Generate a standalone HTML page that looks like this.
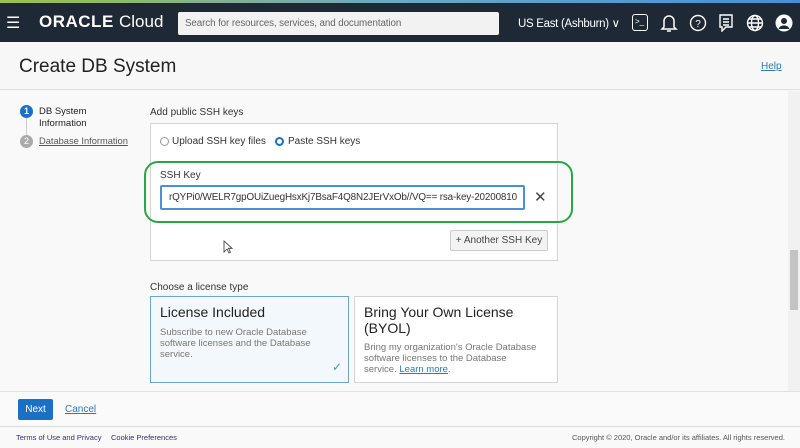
<!DOCTYPE html>
<html><head><style>
*{box-sizing:border-box;margin:0;padding:0}
body{width:800px;height:448px;overflow:hidden;font-family:"Liberation Sans",sans-serif;background:#f9f9f9;position:relative;color:#333}
.a{position:absolute}
.hdr{left:0;top:0;width:800px;height:42px;background:#1e2935}
.grad{left:0;top:0;width:800px;height:3px;background:linear-gradient(90deg,#9bc24a,#6aa7c9,#4b8fd0)}
.search{left:178px;top:12px;width:321px;height:23px;background:#f2f2f2;border-radius:2px;font-size:9.8px;color:#666;padding:6px 7px;letter-spacing:-0.1px}
.w{color:#fff}
.card{background:#fff;border:1px solid #d4d4d4}
</style></head><body>
<div class="a hdr"></div><div class="a grad"></div>
<div class="a w" style="left:6px;top:13px;font-size:16px">☰</div>
<div class="a w" style="left:39px;top:12px;font-size:17px;font-weight:bold;letter-spacing:0.5px">ORACLE <span style="font-weight:normal;letter-spacing:0">Cloud</span></div>
<div class="a search">Search for resources, services, and documentation</div>
<div class="a w" style="left:518px;top:16px;font-size:11.5px;letter-spacing:-0.3px">US East (Ashburn) ∨</div>
<div class="a" style="left:632px;top:14px;width:16px;height:17px;border:1.5px solid #fff;border-radius:3px;color:#fff;font-size:8px;padding-left:2px;line-height:13px">&gt;_</div>
<svg class="a" style="left:660px;top:13px" width="18" height="20" viewBox="0 0 18 20" fill="none" stroke="#fff" stroke-width="1.5"><path d="M4 14V8a5 5 0 0110 0v6l2 2H2z"/><path d="M7 18h4"/></svg>
<svg class="a" style="left:689px;top:14px" width="18" height="18" viewBox="0 0 18 18" fill="none" stroke="#fff" stroke-width="1.4"><circle cx="9" cy="9" r="7.5"/><text x="9" y="13" fill="#fff" stroke="none" font-size="10" text-anchor="middle" font-family="Liberation Sans">?</text></svg>
<svg class="a" style="left:718px;top:14px" width="16" height="18" viewBox="0 0 16 18" fill="none" stroke="#fff" stroke-width="1.4"><path d="M2 1h12v12H8l-4 4v-4H2z"/><path d="M5 5h6M5 8h6M5 11h6"/></svg>
<svg class="a" style="left:746px;top:14px" width="18" height="18" viewBox="0 0 18 18" fill="none" stroke="#fff" stroke-width="1.4"><circle cx="9" cy="9" r="7.5"/><ellipse cx="9" cy="9" rx="3.5" ry="7.5"/><path d="M1.5 9h15M3 5h12M3 13h12"/></svg>
<svg class="a" style="left:775px;top:14px" width="18" height="18" viewBox="0 0 18 18"><circle cx="9" cy="9" r="8.5" fill="#fff"/><circle cx="9" cy="7" r="3" fill="#1e2935"/><path d="M3.5 15a6 6 0 0111 0" fill="#1e2935"/></svg>

<div class="a" style="left:0;top:42px;width:800px;height:48px;background:#f7f7f7;border-bottom:1px solid #ddd"></div>
<div class="a" style="left:19px;top:56px;font-size:19px;color:#222">Create DB System</div>
<div class="a" style="left:761px;top:61px;font-size:10px;color:#2a7ab8;text-decoration:underline">Help</div>

<div class="a" style="left:788px;top:91px;width:12px;height:300px;background:#f1f1f1"></div>
<div class="a" style="left:790px;top:250px;width:8px;height:60px;background:#c4c4c4"></div>

<div class="a" style="left:20px;top:105px;width:13px;height:13px;border-radius:50%;background:#1b70c4;color:#fff;font-size:9px;text-align:center;line-height:13px;font-weight:bold">1</div>
<div class="a" style="left:26px;top:118px;width:1px;height:17px;background:#ccc"></div>
<div class="a" style="left:20px;top:135px;width:13px;height:13px;border-radius:50%;background:#aaa;color:#fff;font-size:9px;text-align:center;line-height:13px">2</div>
<div class="a" style="left:39px;top:106px;font-size:9.5px;line-height:12px;color:#222">DB System<br>Information</div>
<div class="a" style="left:39px;top:136px;font-size:9.3px;color:#555;text-decoration:underline">Database Information</div>

<div class="a" style="left:150px;top:107px;font-size:10px">Add public SSH keys</div>
<div class="a card" style="left:150px;top:123px;width:408px;height:138px"></div>
<div class="a" style="left:160px;top:137px;width:9px;height:9px;border:1px solid #999;border-radius:50%;background:#fff"></div>
<div class="a" style="left:172px;top:136px;font-size:10px">Upload SSH key files</div>
<div class="a" style="left:275px;top:137px;width:9px;height:9px;border-radius:50%;background:#fff;border:2.5px solid #1b70c4"></div>
<div class="a" style="left:288px;top:136px;font-size:10px">Paste SSH keys</div>
<div class="a" style="left:144px;top:161px;width:429px;height:62px;border:2.5px solid #27a844;border-radius:14px"></div>
<div class="a" style="left:160px;top:170px;font-size:10px">SSH Key</div>
<div class="a" style="left:160px;top:185px;width:365px;height:25px;background:#fff;border:2px solid #4a90d9;border-radius:2px;font-size:9.9px;letter-spacing:-0.15px;padding:5px 0 0 7px;white-space:nowrap;overflow:hidden">rQYPi0/WELR7gpOUiZuegHsxKj7BsaF4Q8N2JErVxOb//VQ== rsa-key-20200810</div>
<div class="a" style="left:534px;top:188px;font-size:15px;color:#444">✕</div>
<div class="a" style="left:450px;top:230px;width:98px;height:21px;background:#f3f3f3;border:1px solid #ccc;border-radius:2px;font-size:10px;text-align:center;line-height:19px;color:#444">+ Another SSH Key</div>
<svg class="a" style="left:223px;top:240px" width="10" height="14" viewBox="0 0 10 14"><path d="M1 1v11l3-3 2 4 1.5-.7-2-4H9z" fill="#fff" stroke="#333" stroke-width="0.8"/></svg>

<div class="a" style="left:150px;top:282px;font-size:10px">Choose a license type</div>
<div class="a" style="left:150px;top:296px;width:199px;height:87px;background:#f2f8fb;border:1px solid #6aa7c9"></div>
<div class="a" style="left:160px;top:304px;font-size:14px;color:#222">License Included</div>
<div class="a" style="left:160px;top:327px;font-size:9.5px;line-height:11px;color:#777;width:170px">Subscribe to new Oracle Database software licenses and the Database service.</div>
<div class="a" style="left:332px;top:360px;font-size:12px;color:#4a90c0">✓</div>
<div class="a card" style="left:354px;top:296px;width:204px;height:87px"></div>
<div class="a" style="left:364px;top:304px;font-size:14px;line-height:16px;color:#222">Bring Your Own License<br>(BYOL)</div>
<div class="a" style="left:364px;top:342px;font-size:9.5px;line-height:11px;color:#777;width:180px">Bring my organization's Oracle Database<br>software licenses to the Database<br>service. <span style="color:#2a7ab8;text-decoration:underline">Learn more</span>.</div>

<div class="a" style="left:0;top:391px;width:800px;height:36px;background:#fafafa;border-top:1px solid #e2e2e2;border-bottom:1px solid #ddd"></div>
<div class="a" style="left:18px;top:399px;width:35px;height:21px;background:#1b70c4;border-radius:2px;color:#fff;font-size:10px;display:flex;align-items:center;justify-content:center">Next</div>
<div class="a" style="left:65px;top:404px;font-size:10px;color:#2a7ab8;text-decoration:underline">Cancel</div>
<div class="a" style="left:16px;top:433px;font-size:7.5px;color:#336">Terms of Use and Privacy</div>
<div class="a" style="left:111px;top:433px;font-size:7.5px;color:#336">Cookie Preferences</div>
<div class="a" style="left:572px;top:433px;font-size:7.5px;color:#555">Copyright © 2020, Oracle and/or its affiliates. All rights reserved.</div>
</body></html>
